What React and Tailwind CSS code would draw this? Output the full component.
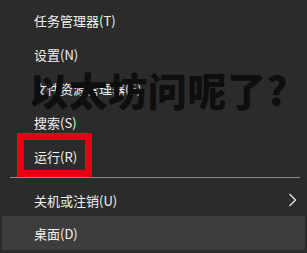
import React from "react";

const font = { fontFamily: '"Noto Sans CJK SC", "Noto Sans", sans-serif' };

function Item({ label, h = "h-[34px]", active = false, chevron = false }) {
  return (
    <div
      className={`relative flex items-center ${h} pl-[32px] text-[13px] text-[#f2f2f2] ${
        active ? "bg-[#3d3d3d]" : ""
      }`}
    >
      <span className="leading-none">{label}</span>
      {chevron && (
        <svg
          className="absolute right-[8px] top-1/2 -translate-y-1/2"
          width="9"
          height="14"
          viewBox="0 0 9 14"
        >
          <path d="M1.5 1 L7.5 7 L1.5 13" fill="none" stroke="#e8e8e8" strokeWidth="1.3" />
        </svg>
      )}
    </div>
  );
}

export default function App() {
  return (
    <div
      className="relative w-[307px] h-[253px] overflow-hidden bg-[#2b2b2b]"
      style={font}
    >
      <div className="flex flex-col px-[2px] pt-[3px]">
        <Item label="任务管理器(T)" />
        <Item label="设置(N)" />
        <Item label="文件资源管理器(E)" />
        <Item label="搜索(S)" />
        <Item label="运行(R)" />
        <div className="mt-[4px] mb-[6px] ml-[8px] mr-[5px] h-px bg-[#8a8a8a]" />
        <Item label="关机或注销(U)" h="h-[32px]" chevron />
        <Item label="桌面(D)" active />
      </div>

      <div className="absolute left-[17px] top-[133px] w-[75px] h-[44px] border-[7px] border-[#e60012]" />

      <div
        className="absolute left-[29px] top-[70px] text-[39px] font-black leading-none text-[#0e0e0e] whitespace-nowrap tracking-[0.6px]"
        style={font}
      >
        以太坊问呢了?
      </div>
    </div>
  );
}
